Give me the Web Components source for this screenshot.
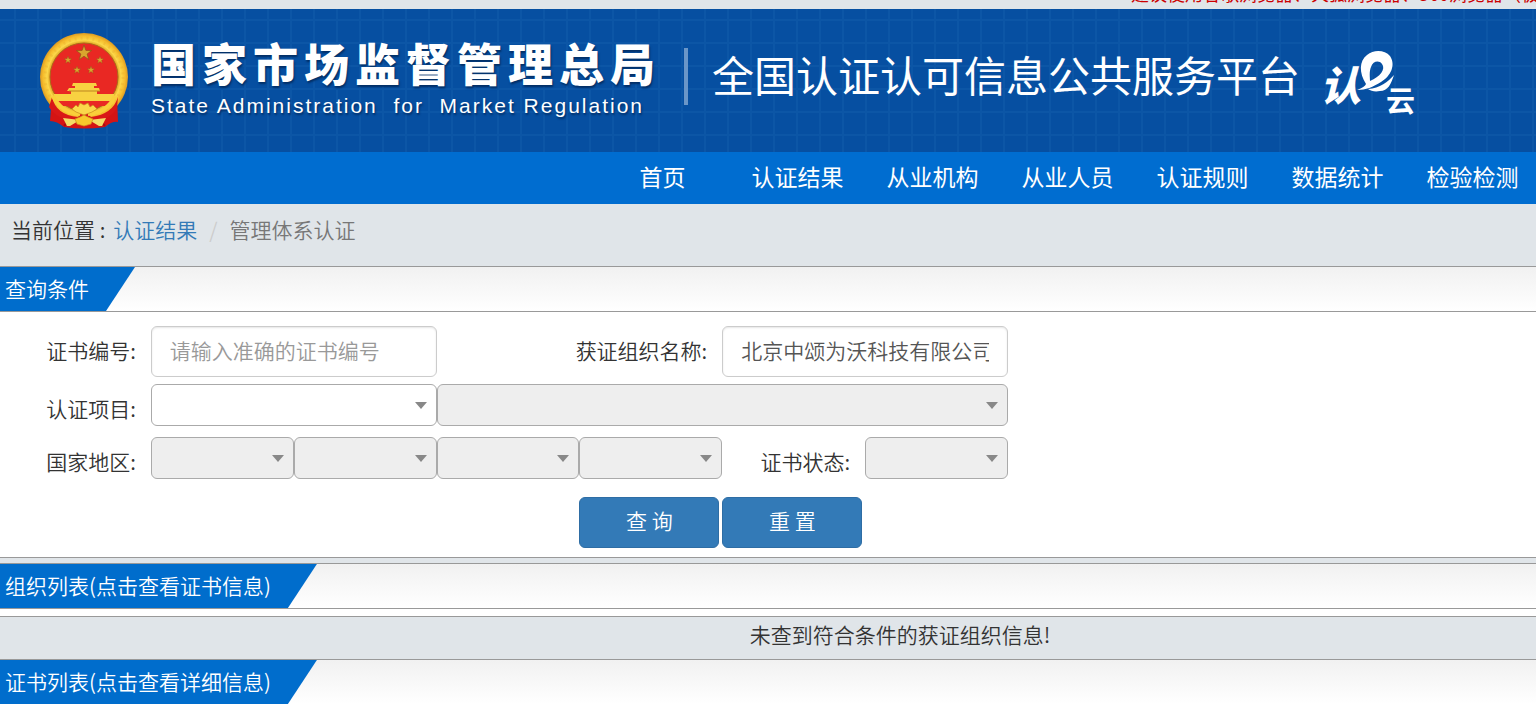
<!DOCTYPE html>
<html lang="zh-CN">
<head>
<meta charset="utf-8">
<title>全国认证认可信息公共服务平台</title>
<style>
  body {
    margin: 0;
    overflow: hidden;
    background: #fff;
    color: #333;
    font: 350 21px/30px "Noto Sans CJK SC", sans-serif;
  }
</style>
</head>
<body>
<cx-notice>建议使用谷歌浏览器、火狐浏览器、360浏览器（极速模式）</cx-notice>
<cx-header></cx-header>
<cx-nav></cx-nav>
<cx-breadcrumb></cx-breadcrumb>
<cx-section-title>查询条件</cx-section-title>
<cx-query-form></cx-query-form>
<cx-section-title>组织列表(点击查看证书信息)</cx-section-title>
<cx-empty-message>未查到符合条件的获证组织信息!</cx-empty-message>
<cx-section-title joined>证书列表(点击查看详细信息)</cx-section-title>

<script>
(function() {
  function define(name, html) {
    const template = document.createElement('template');
    template.innerHTML = html;
    customElements.define(name, class extends HTMLElement {
      constructor() {
        super();
        this.attachShadow({mode: 'open'});
        this.shadowRoot.appendChild(template.content.cloneNode(true));
      }
    });
  }

  define('cx-notice', `
    <style>
      :host {
        display: flex;
        align-items: flex-end;
        box-sizing: border-box;
        height: 9px;
        padding: 0 0 4px 1131px;
        overflow: hidden;
        background: #e0e5e9;
        color: #c00;
        font-size: 18px;
        font-weight: 400;
        line-height: 24px;
        white-space: nowrap;
      }
    </style>
    <slot></slot>
  `);

  define('cx-emblem', `
    <style>
      :host { display: block; }
      svg { display: block; }
    </style>
    <svg width="90" height="96" viewBox="0 0 90 96" role="img" aria-label="国徽">
      <defs>
        <radialGradient id="gold" cx="50%" cy="50%" r="50%">
          <stop offset="76%" stop-color="#d99a1c"/>
          <stop offset="84%" stop-color="#fcd84a"/>
          <stop offset="93%" stop-color="#f6bd2d"/>
          <stop offset="100%" stop-color="#dc9a22"/>
        </radialGradient>
        <path id="star" d="M0-8 1.9-2.6 7.6-2.5 3.1 1 4.7 6.5 0 3.2-4.7 6.5-3.1 1-7.6-2.5-1.9-2.6z"/>
      </defs>
      <path d="M12 64 10 88q7 0 14 6 20 3 41 0 7-6 13-5l-1-25z" fill="#d41414"/>
      <path d="M14 72q7 10 18 12l-8 9M75 72q-7 10-18 12l8 9" fill="none" stroke="#a80c10" stroke-width="2"/>
      <circle cx="44" cy="44" r="44" fill="url(#gold)"/>
      <circle cx="44" cy="44" r="39" fill="none" stroke="#e4a52b" stroke-width="3" stroke-dasharray="2 4" opacity=".3"/>
      <circle cx="44" cy="44" r="34" fill="#e92823" stroke="#ad671b"/>
      <g fill="#d9a62e" stroke="#8f5518" stroke-width=".7">
        <use href="#star" transform="translate(44 20)"/>
        <use href="#star" transform="translate(28 27) scale(.5)"/>
        <use href="#star" transform="translate(60 27) scale(.5)"/>
        <use href="#star" transform="translate(37 37) scale(.5)"/>
        <use href="#star" transform="translate(51 37) scale(.5)"/>
      </g>
      <path d="M33 50h23l1 3h-3v2h5l1 3h-3v3h17v6h-4q2 2 0 4H17q-1-3 1-4h-4v-6h17v-3h-4l2-3h6v-2h-3z" fill="#f8d241"/>
      <path d="M29 58h31" stroke="#bd8521"/>
      <path d="M18 68h53l-6 5H23z" fill="#e92823"/>
      <path d="M12 64q4 18 26 20l6-7 7 7q22-3 27-20l-1 11q-7 12-24 13l-9-5-9 5q-19-2-26-14z" fill="#d91817"/>
      <path d="M13 63q8 17 27 18M75 63q-8 17-27 18" fill="none" stroke="#f9cf3a" stroke-width="4"/>
      <path d="m32 76 4-4 2 2 2-4 4 2 4-2 2 4 3-2 4 4-5 3-8 3-8-3z" fill="#fbd84b" stroke="#c88a1d" stroke-width=".7"/>
      <path d="m23 85 17 2-10 6h-3zM66 85l-17 2 10 6h3z" fill="#f4dc66"/>
      <path d="m44 82 4 2 5 2-2 5-7 2-7-2-2-5 5-2z" fill="#f8c92c" stroke="#d08f1c" stroke-width=".7"/>
    </svg>
  `);

  define('cx-cloud-logo', `
    <style>
      :host { display: block; }
      svg { display: block; }
      text {
        font-family: "Noto Sans CJK SC", sans-serif;
        font-weight: 700;
      }
      .brush {
        font-style: italic;
        font-weight: 900;
      }
    </style>
    <svg width="110" height="84" viewBox="0 0 110 84" fill="#fff">
      <text class="brush" x="0" y="53" font-size="41">认</text>
      <path fill-rule="evenodd" d="M37 42Q45 39 46 36C39 25 39 13 47 7 54 1 65 2 70 8 76 17 71 28 61 34 53 39 46 42 37 42zM50 33C60 29 66 21 62 16 59 12 53 13 51 19 49 24 50 29 50 33z"/>
      <path d="M48 41C60 40 68 34 74 27 71 36 68 43 60 43 55 44 51 43 48 41z"/>
      <text x="66" y="64" font-size="29">云</text>
    </svg>
  `);

  define('cx-header', `
    <style>
      :host {
        --line: #0c56a6;
        display: flex;
        align-items: flex-start;
        box-sizing: border-box;
        height: 143px;
        padding: 24px 0 0 40px;
        overflow: hidden;
        color: #fff;
        white-space: nowrap;
        background:
          repeating-linear-gradient(90deg, transparent 0 14px, var(--line) 14px 16px, transparent 16px 23px),
          repeating-linear-gradient(transparent 0 10px, var(--line) 10px 12px, transparent 12px 23px),
          #064fa1;
      }
      .agency {
        margin-left: 21px;
        text-shadow: 1px 2px 2px #032f66;
      }
      .agency strong {
        display: block;
        font-size: 45px;
        font-weight: 900;
        line-height: 60px;
        letter-spacing: 6px;
      }
      .agency span {
        display: block;
        font: 21px/26px "Liberation Sans", sans-serif;
        letter-spacing: 2px;
        white-space: pre;
      }
      .divider {
        width: 4px;
        height: 57px;
        margin: 15px 24px 0 23px;
        background: #6a96c8;
      }
      h1 {
        margin: 11px 0 0;
        font-size: 42px;
        font-weight: 400;
        line-height: 60px;
      }
      cx-cloud-logo { margin: 15px 0 0 20px; }
    </style>
    <cx-emblem></cx-emblem>
    <div class="agency">
      <strong>国家市场监督管理总局</strong>
      <span>State Administration  for  Market Regulation</span>
    </div>
    <div class="divider"></div>
    <h1>全国认证认可信息公共服务平台</h1>
    <cx-cloud-logo></cx-cloud-logo>
  `);

  define('cx-nav', `
    <style>
      :host {
        display: block;
        padding: 0 0 4px 595px;
        background: #006dd0;
      }
      nav { display: flex; }
      a {
        flex: 0 0 135px;
        color: #fff;
        font-size: 23px;
        font-weight: 400;
        line-height: 48px;
        text-align: center;
        text-decoration: none;
      }
    </style>
    <nav>
      <a href="#">首页</a>
      <a href="#">认证结果</a>
      <a href="#">从业机构</a>
      <a href="#">从业人员</a>
      <a href="#">认证规则</a>
      <a href="#">数据统计</a>
      <a href="#">检验检测</a>
    </nav>
  `);

  define('cx-breadcrumb', `
    <style>
      :host {
        display: flex;
        padding: 10px 11px 22px;
        background: #e0e5e9;
      }
      a {
        margin-left: 8px;
        color: #337ab7;
        text-decoration: none;
      }
      i {
        margin: 0 12px;
        color: #ccc;
        font-style: normal;
      }
      .current { color: #777; }
    </style>
    <span>当前位置 :</span>
    <a href="#">认证结果</a>
    <i>/</i>
    <span class="current">管理体系认证</span>
  `);

  define('cx-section-title', `
    <style>
      :host {
        display: block;
        border: solid #999;
        border-width: 1px 0;
        background: linear-gradient(#f1f1f1, #fff);
      }
      :host([joined]) { border-top: 0; }
      h2 {
        width: max-content;
        margin: 0;
        padding: 0 46px 2px 5px;
        background: #006dcc;
        color: #fff;
        font-size: 21px;
        font-weight: inherit;
        line-height: 42px;
        clip-path: polygon(0 0, 100% 0, calc(100% - 29px) 100%, 0 100%);
      }
    </style>
    <h2><slot></slot></h2>
  `);

  const arrow = '<svg width="12" height="7"><path d="M0 0h12L6 7z" fill="#888"/></svg>';

  define('cx-query-form', `
    <style>
      :host {
        display: block;
        padding: 14px 8px 9px;
        border-bottom: 1px solid #999;
        box-shadow: 0 5px #e0e5e9;
        margin-bottom: 5px;
      }
      form { max-width: 1000px; }
      .row {
        display: grid;
        grid-template-columns: repeat(7, 1fr);
        align-items: start;
        margin-bottom: 11px;
      }
      .row.inputs { margin-bottom: 7px; }
      .row.selects { margin-bottom: 18px; }
      .wide { grid-column: span 2; }
      .full { grid-column: span 4; }
      label {
        padding: 9px 15px 0 0;
        text-align: right;
        white-space: nowrap;
      }
      input, select, button {
        box-sizing: border-box;
        width: 100%;
        margin: 0;
        border-radius: 6px;
        font: inherit;
      }
      input {
        height: 51px;
        padding: 0 18px 3px;
        border: 1px solid #ccc;
        box-shadow: inset 0 1px 2px rgba(0, 0, 0, .1);
        color: #555;
      }
      input::placeholder { color: #999; }
      .select {
        display: grid;
        align-items: center;
      }
      .select > * { grid-area: 1 / 1; }
      .select svg {
        justify-self: end;
        margin-right: 10px;
        pointer-events: none;
      }
      select {
        height: 42px;
        border: 1px solid #aaa;
        background: #fff;
        appearance: none;
      }
      select:disabled {
        background: #eee;
        opacity: 1;
      }
      .buttons {
        display: flex;
        grid-column: 5 / span 3;
        gap: 3px;
      }
      .row:last-child { margin: 0; }
      button {
        width: 140px;
        height: 51px;
        padding: 0 0 5px;
        border: 1px solid #2e6da4;
        background: #337ab7;
        color: #fff;
      }
    </style>
    <form>
      <div class="row inputs">
        <label for="number">证书编号:</label>
        <input class="wide" id="number" placeholder="请输入准确的证书编号">
        <label class="wide" for="company">获证组织名称:</label>
        <input class="wide" id="company" value="北京中颂为沃科技有限公司">
      </div>
      <div class="row">
        <label for="project">认证项目:</label>
        <div class="select wide"><select id="project"></select>${arrow}</div>
        <div class="select full"><select aria-label="认证项目" disabled></select>${arrow}</div>
      </div>
      <div class="row selects">
        <label for="region">国家地区:</label>
        <div class="select"><select id="region" disabled></select>${arrow}</div>
        <div class="select"><select aria-label="国家地区" disabled></select>${arrow}</div>
        <div class="select"><select aria-label="国家地区" disabled></select>${arrow}</div>
        <div class="select"><select aria-label="国家地区" disabled></select>${arrow}</div>
        <label for="status">证书状态:</label>
        <div class="select"><select id="status" disabled></select>${arrow}</div>
      </div>
      <div class="row">
        <div class="buttons">
          <button type="button">查 询</button>
          <button type="reset">重 置</button>
        </div>
      </div>
    </form>
  `);

  define('cx-empty-message', `
    <style>
      :host {
        display: block;
        margin-top: 7px;
        padding: 2px 0 10px 264px;
        border: solid #999;
        border-width: 1px 0;
        background: #e0e5e9;
        text-align: center;
      }
    </style>
    <slot></slot>
  `);
})();
</script>
</body>
</html>
